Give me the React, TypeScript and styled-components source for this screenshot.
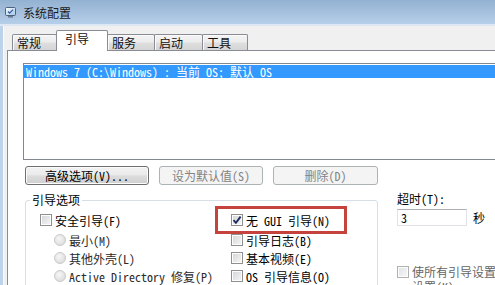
import React from 'react';
import styled, { createGlobalStyle, css } from 'styled-components';

const UI_FONT = `"Noto Sans CJK SC", "Liberation Sans", sans-serif`;
const SIM_FONT = `"Noto Sans Mono CJK SC", "Noto Sans CJK SC", "Liberation Mono", monospace`;

const GlobalStyle = createGlobalStyle`
  html, body {
    margin: 0;
    padding: 0;
    background: #f0f0f0;
  }
  body {
    font-family: ${SIM_FONT};
    font-size: 12px;
    color: #000;
  }
`;

const Window = styled.div`
  width: 495px;
  height: 285px;
  overflow: hidden;
  display: flex;
  flex-direction: column;
  background: #f0f0f0;
`;

const TitleBar = styled.div`
  height: 26px;
  flex: none;
  display: flex;
  align-items: center;
  gap: 7px;
  padding: 1px 0 0 5px;
  box-sizing: border-box;
  background: linear-gradient(#93b1d1, #b7cfe9);
  border-bottom: 2px solid #dde8f4;
  font-family: ${UI_FONT};
  font-size: 12px;
  color: #1b1b1b;
`;

const Body = styled.div`
  flex: 1;
  min-height: 0;
  display: flex;
  flex-direction: column;
  border-left: 3px solid #bdd3eb;
  box-shadow: inset 1px 0 0 #f8fbfe;
  padding: 4px 0 0 4px;
`;

const TabStrip = styled.div`
  flex: none;
  display: flex;
  align-items: flex-end;
  height: 21px;
  padding-left: 5px;
  margin-bottom: -1px;
  position: relative;
  z-index: 1;
`;

const Tab = styled.div<{ $w: number; $active?: boolean }>`
  box-sizing: border-box;
  width: ${p => p.$w}px;
  height: 16px;
  margin: 0 0 1px -1px;
  padding-left: 4px;
  border: 1px solid #898c95;
  border-bottom: none;
  border-radius: 2px 2px 0 0;
  background: linear-gradient(#f4f4f4, #ececec 48%, #dfdfdf 52%, #d4d4d4);
  box-shadow: inset 1px 1px 0 #fbfbfb;
  font-family: ${UI_FONT};
  font-size: 12px;
  line-height: 15px;
  color: #111;

  &:first-child {
    margin-left: 0;
  }

  ${p =>
    p.$active &&
    css`
      position: relative;
      z-index: 2;
      height: 21px;
      margin-bottom: 0;
      padding-left: 8px;
      background: #fff;
      box-shadow: none;
      line-height: 16px;
    `}
`;

const Panel = styled.div`
  flex: 1;
  min-height: 0;
  display: flex;
  flex-direction: column;
  background: #fff;
  border-top: 1px solid #898c95;
  border-left: 1px solid #898c95;
  padding: 12px 0 0 15px;
`;

const ListBox = styled.div`
  box-sizing: border-box;
  flex: none;
  height: 97px;
  margin-right: -10px;
  padding-top: 1px;
  border: 1px solid #828790;
  border-right: none;
  background: #fff;
`;

const ListRow = styled.div<{ $selected?: boolean }>`
  height: 13px;
  line-height: 13px;
  padding-left: 2px;
  white-space: nowrap;
  font-family: ${SIM_FONT};
  font-size: 12px;
  ${p =>
    p.$selected &&
    css`
      background: #3399ff;
      color: #fff;
    `}
`;

const ButtonRow = styled.div`
  flex: none;
  display: flex;
  gap: 10px;
  margin: 6px 0 0 2px;
`;

const Button = styled.button<{ $w: number }>`
  box-sizing: border-box;
  width: ${p => p.$w}px;
  height: 19px;
  padding: 0;
  border: 1px solid #707070;
  border-radius: 3px;
  background: linear-gradient(#f2f2f2, #ebebeb 45%, #dddddd 52%, #cfcfcf);
  box-shadow: inset 0 0 0 1px #fbfbfb;
  font-family: ${SIM_FONT};
  font-size: 12px;
  line-height: 17px;
  color: #000;

  &:disabled {
    border-color: #adb2b5;
    background: #f4f4f4;
    box-shadow: none;
    color: #838383;
  }
`;

const Lower = styled.div`
  flex: none;
  display: flex;
  align-items: flex-start;
  margin: 15px 0 0 2px;
`;

const GroupBox = styled.div`
  box-sizing: border-box;
  width: 353px;
  height: 120px;
  flex: none;
  border: 1px solid #d5dfe5;
  border-radius: 3px;
`;

const Legend = styled.div`
  width: fit-content;
  margin: -8px 0 0 4px;
  padding: 0 2px;
  background: #fff;
  font-family: ${SIM_FONT};
  font-size: 12px;
  line-height: 14px;
`;

const OptionGrid = styled.div`
  display: grid;
  grid-template-columns: 191px auto;
  grid-template-rows: 20px 18px 18px 18px;
  grid-auto-flow: column;
  margin-top: 4px;
  padding-left: 14px;
`;

const Option = styled.label<{ $indent?: boolean; $dim?: boolean; $marked?: boolean }>`
  position: relative;
  display: flex;
  align-items: center;
  gap: 3px;
  height: 18px;
  padding-left: ${p => (p.$indent ? 14 : 0)}px;
  white-space: nowrap;
  font-family: ${SIM_FONT};
  font-size: 12px;
  color: ${p => (p.$dim ? '#2a2a2a' : '#000')};

  ${p =>
    p.$marked &&
    css`
      &::after {
        content: '';
        position: absolute;
        top: -5px;
        bottom: -5px;
        left: -16px;
        width: 132px;
        border: 3px solid #c6423d;
        box-sizing: border-box;
      }
    `}
`;

const CheckBox = styled.span`
  box-sizing: border-box;
  width: 12px;
  height: 12px;
  flex: none;
  display: flex;
  align-items: center;
  justify-content: center;
  border: 1px solid #8e8f8f;
  background: linear-gradient(135deg, #d2d4d8, #f7f7f7);
  box-shadow: inset 0 0 0 1px #fdfdfd;
`;

const Radio = styled.span`
  box-sizing: border-box;
  width: 12px;
  height: 12px;
  flex: none;
  border-radius: 50%;
  border: 1px solid #c9c9c9;
  background: radial-gradient(circle at 40% 35%, #f6f6f6, #d6d6d6);
`;

const TimeoutCol = styled.div`
  display: flex;
  flex-direction: column;
  margin: -8px 0 0 19px;
  font-family: ${SIM_FONT};
  font-size: 12px;
`;

const FieldLabel = styled.div`
  line-height: 14px;
`;

const InputRow = styled.div`
  display: flex;
  align-items: center;
  gap: 6px;
  margin-top: 3px;
`;

const TextInput = styled.div`
  box-sizing: border-box;
  width: 70px;
  height: 17px;
  padding-left: 3px;
  border: 1px solid #e2e3ea;
  border-top-color: #abadb3;
  background: #fff;
  line-height: 15px;
`;

const PermanentOption = styled.label`
  display: flex;
  align-items: flex-start;
  gap: 3px;
  margin-top: 38px;
  opacity: 0.7;
  color: #222;

  & > span:first-child {
    margin-top: 2px;
  }
`;

const WrapText = styled.span`
  width: 132px;
  flex: none;
  line-height: 15px;
`;

const Check = () => (
  <svg width="10" height="10" viewBox="0 0 10 10">
    <path d="M1.5 5.2 L3.9 7.8 L8.6 1.6" fill="none" stroke="#1f2d5e" strokeWidth="1.9" />
  </svg>
);

const AppIcon = () => (
  <svg width="11" height="11" viewBox="0 0 11 11">
    <defs>
      <linearGradient id="scr" x1="0" y1="0" x2="1" y2="1">
        <stop offset="0" stopColor="#ffffff" />
        <stop offset="1" stopColor="#9fc3e6" />
      </linearGradient>
    </defs>
    <rect x="0.5" y="0.5" width="10" height="8" rx="1" fill="url(#scr)" stroke="#4f627d" />
    <rect x="3" y="9" width="5" height="1.6" fill="#6d7d92" />
    <path d="M3 4.5 L4.7 6.2 L8 2.6" fill="none" stroke="#2f5f9b" strokeWidth="1.2" />
  </svg>
);

const tabs = [
  { label: '常规', w: 45 },
  { label: '引导', w: 52, active: true },
  { label: '服务', w: 48 },
  { label: '启动', w: 49 },
  { label: '工具', w: 46 },
];

export default function App() {
  return (
    <>
      <GlobalStyle />
      <Window>
        <TitleBar>
          <AppIcon />
          系统配置
        </TitleBar>
        <Body>
          <TabStrip>
            {tabs.map(t => (
              <Tab key={t.label} $w={t.w} $active={t.active}>
                {t.label}
              </Tab>
            ))}
          </TabStrip>
          <Panel>
            <ListBox>
              <ListRow $selected>{'Windows 7 (C:\\Windows) : 当前 OS; 默认 OS'}</ListRow>
            </ListBox>
            <ButtonRow>
              <Button $w={124}>高级选项(V)...</Button>
              <Button $w={104} disabled>
                设为默认值(S)
              </Button>
              <Button $w={105} disabled>
                删除(D)
              </Button>
            </ButtonRow>
            <Lower>
              <GroupBox>
                <Legend>引导选项</Legend>
                <OptionGrid>
                  <Option>
                    <CheckBox />
                    安全引导(F)
                  </Option>
                  <Option $indent $dim>
                    <Radio />
                    最小(M)
                  </Option>
                  <Option $indent $dim>
                    <Radio />
                    其他外壳(L)
                  </Option>
                  <Option $indent $dim>
                    <Radio />
                    Active Directory 修复(P)
                  </Option>
                  <Option $marked>
                    <CheckBox>
                      <Check />
                    </CheckBox>
                    无 GUI 引导(N)
                  </Option>
                  <Option>
                    <CheckBox />
                    引导日志(B)
                  </Option>
                  <Option>
                    <CheckBox />
                    基本视频(E)
                  </Option>
                  <Option>
                    <CheckBox />
                    OS 引导信息(O)
                  </Option>
                </OptionGrid>
              </GroupBox>
              <TimeoutCol>
                <FieldLabel>超时(T):</FieldLabel>
                <InputRow>
                  <TextInput>3</TextInput>
                  秒
                </InputRow>
                <PermanentOption>
                  <CheckBox />
                  <WrapText>使所有引导设置成为永久设置(K)</WrapText>
                </PermanentOption>
              </TimeoutCol>
            </Lower>
          </Panel>
        </Body>
      </Window>
    </>
  );
}
